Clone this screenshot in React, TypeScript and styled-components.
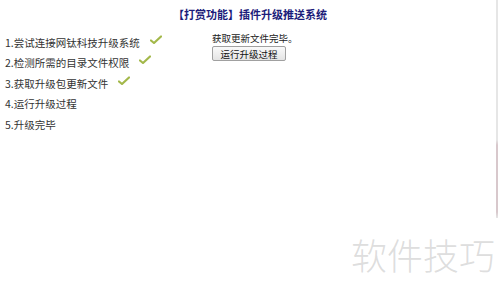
import React from "react";
import styled, { createGlobalStyle } from "styled-components";

const Global = createGlobalStyle`
  html, body { margin: 0; padding: 0; background: #ffffff; }
  body { font-family: "SimSun", "Noto Sans CJK SC", sans-serif; }
`;

const Page = styled.div`
  position: relative;
  width: 500px;
  height: 293px;
  overflow: hidden;
  background: #ffffff;
  color: #222222;
`;

const Title = styled.h1`
  margin: 0;
  padding-top: 7px;
  text-align: center;
  font-size: 11px;
  line-height: 15px;
  font-weight: bold;
  color: #1c1c7a;
  font-family: "Noto Sans CJK SC", sans-serif;
`;

const Body = styled.div`
  display: grid;
  grid-template-columns: 212px 1fr;
  padding-top: 10px;
`;

const Steps = styled.ol`
  list-style: none;
  margin: 0;
  padding: 0 0 0 5px;
  display: flex;
  flex-direction: column;
  gap: 0;
`;

const Step = styled.li`
  display: flex;
  align-items: center;
  height: 20.5px;
  font-size: 10.5px;
  color: #333333;
  font-family: "Noto Sans CJK SC", sans-serif;
`;

const Check = styled.svg`
  margin-left: 10px;
  margin-top: -6px;
  width: 12px;
  height: 9px;
`;

const Status = styled.div`
  display: flex;
  flex-direction: column;
  align-items: flex-start;
  gap: 2px;
  padding-top: 0;
`;

const StatusText = styled.div`
  font-size: 9.5px;
  line-height: 12px;
  color: #222222;
  font-family: "Noto Sans CJK SC", sans-serif;
`;

const RunButton = styled.button`
  width: 74px;
  height: 15px;
  padding: 0;
  font-size: 9.5px;
  line-height: 12px;
  color: #111111;
  font-family: "Noto Sans CJK SC", sans-serif;
  background: linear-gradient(#fafafa, #e4e4e4);
  border: 1px solid #a0a0a0;
  border-radius: 2px;
`;

const ScrollLine = styled.div`
  position: absolute;
  right: 2px;
  top: 0;
  width: 2px;
  height: 218px;
  background: linear-gradient(
    #e6e6e6 0,
    #e6e6e6 140px,
    #d8c8cc 145px,
    #d8c8cc 212px,
    #e6e6e6 218px
  );
`;

const Watermark = styled.div`
  position: absolute;
  left: 351px;
  top: 232px;
  font-size: 36px;
  line-height: 44px;
  letter-spacing: 0px;
  color: rgba(180, 180, 180, 0.45);
  font-family: "Noto Sans CJK SC", sans-serif;
  font-weight: 300;
`;

const CheckMark = () => (
  <Check viewBox="0 0 12 9">
    <path
      d="M1 5.5 L4 8 L11 1.5"
      fill="none"
      stroke="#a3b84a"
      strokeWidth="2.2"
      strokeLinecap="round"
      strokeLinejoin="round"
    />
  </Check>
);

const steps = [
  { text: "1.尝试连接网钛科技升级系统", done: true },
  { text: "2.检测所需的目录文件权限", done: true },
  { text: "3.获取升级包更新文件", done: true },
  { text: "4.运行升级过程", done: false },
  { text: "5.升级完毕", done: false },
];

export default function App() {
  return (
    <Page>
      <Global />
      <Title>【打赏功能】插件升级推送系统</Title>
      <Body>
        <Steps>
          {steps.map((s) => (
            <Step key={s.text}>
              {s.text}
              {s.done && <CheckMark />}
            </Step>
          ))}
        </Steps>
        <Status>
          <StatusText>获取更新文件完毕。</StatusText>
          <RunButton>运行升级过程</RunButton>
        </Status>
      </Body>
      <ScrollLine />
      <Watermark>软件技巧</Watermark>
    </Page>
  );
}
